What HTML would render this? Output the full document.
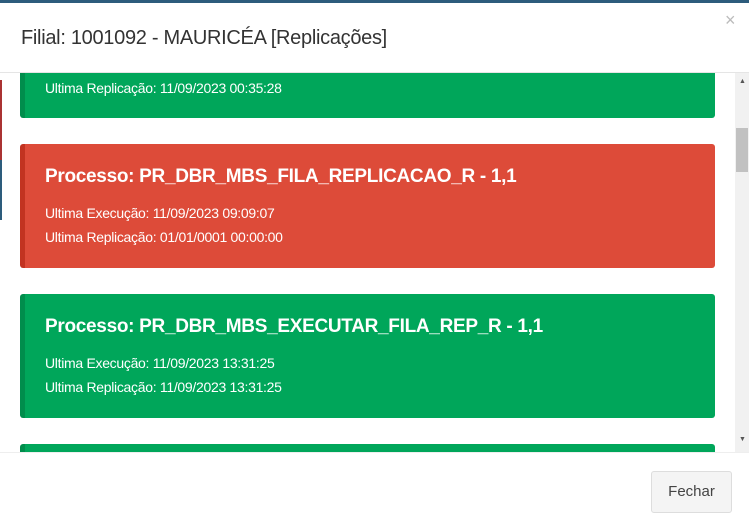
<!DOCTYPE html>
<html><head><meta charset="utf-8"><style>
html,body{margin:0;width:749px;height:532px;overflow:hidden}
body{background:#fff;font-family:"Liberation Sans",sans-serif;position:relative}
.top{position:absolute;left:0;top:0;width:749px;height:3px;background:#2d5c7c}
.lb{position:absolute;left:0;top:80px;width:2px;height:80px;background:#a33}
.lb2{position:absolute;left:0;top:160px;width:2px;height:60px;background:#2d5c7c}
.title{position:absolute;left:21px;top:27px;font-size:20px;color:#333;letter-spacing:-0.3px}
.x{position:absolute;left:725px;top:10px;font-size:18px;color:#bbb}
.hd{position:absolute;left:0;top:72px;width:749px;height:1px;background:#e5e5e5}
.ft{position:absolute;left:0;top:452px;width:749px;height:1px;background:#eee}
.body{position:absolute;left:0;top:73px;width:735px;height:379px;overflow:hidden}
.card{position:absolute;left:20px;width:690px;border-left:5px solid;border-radius:3px;color:#fff}
.g{background:#00a65a;border-color:#008d4c}
.r{background:#dd4b39;border-color:#c23321}
.card h{position:absolute;left:20px;top:22px;font-weight:bold;font-size:19px;letter-spacing:-0.3px}
.card p{position:absolute;left:20px;margin:0;font-size:14px;letter-spacing:-0.3px}
.sb{position:absolute;left:735px;top:73px;width:14px;height:379px;background:#f1f1f1}
.thumb{position:absolute;left:736px;top:128px;width:12px;height:44px;background:#c1c1c1}
.btn{position:absolute;left:651px;top:471px;width:79px;height:40px;border:1px solid #ddd;border-radius:3px;background:#f4f4f4;color:#444;font-size:15px;text-align:center;line-height:40px}
</style></head><body>
<div class="top"></div><div class="lb"></div><div class="lb2"></div>
<div class="title">Filial: 1001092 - MAURICÉA [Replicações]</div>
<div class="x">×</div>
<div class="hd"></div>
<div class="body">
<div class="card g" style="top:-60px;height:105px"><p style="top:67px">Ultima Replicação: 11/09/2023 00:35:28</p></div>
<div class="card r" style="top:71px;height:124px"><h>Processo: PR_DBR_MBS_FILA_REPLICACAO_R - 1,1</h><p style="top:61px">Ultima Execução: 11/09/2023 09:09:07</p><p style="top:85px">Ultima Replicação: 01/01/0001 00:00:00</p></div>
<div class="card g" style="top:221px;height:124px"><h>Processo: PR_DBR_MBS_EXECUTAR_FILA_REP_R - 1,1</h><p style="top:61px">Ultima Execução: 11/09/2023 13:31:25</p><p style="top:85px">Ultima Replicação: 11/09/2023 13:31:25</p></div>
<div class="card g" style="top:371px;height:124px"></div>
</div>
<div class="sb"></div><div class="thumb"></div>
<div style="position:absolute;left:739px;top:78px;font-size:7px;line-height:8px;color:#555">▲</div>
<div style="position:absolute;left:739px;top:436px;font-size:7px;line-height:8px;color:#555">▼</div>
<div class="ft"></div>
<div class="btn">Fechar</div>
</body></html>
